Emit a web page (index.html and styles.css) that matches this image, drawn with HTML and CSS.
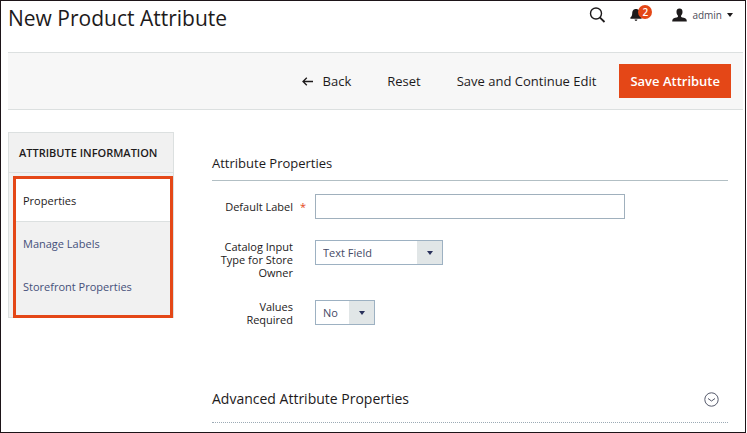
FILE: index.html
```html
<!DOCTYPE html>
<html lang="en">
<head>
<meta charset="utf-8">
<title>New Product Attribute</title>
<link rel="stylesheet" href="styles.css">
</head>
<body>
<div class="page">
  <header class="header">
    <h1 class="title">New Product Attribute</h1>
    <div class="tools">
      <button class="tool" type="button" aria-label="Search">
        <svg width="17" height="17" viewBox="0 0 17 17" fill="none" stroke="#1d1a1b"><circle cx="7" cy="6.5" r="5.5" stroke-width="1.4"/><path d="M10.8 10.4L15.5 15" stroke-width="1.800"/></svg>
      </button>
      <button class="tool bell" type="button" aria-label="Notifications">
        <svg width="12" height="14" viewBox="0 0 12 14" fill="#1d1a1b"><path d="M6 1C3 1 2.300 3.200 2.200 5.600C2.100 7.600 1.600 8.600.4 9.600V10.800H11.600V9.600C10.400 8.600 9.900 7.600 9.800 5.600C9.700 3.200 9 1 6 1ZM4.600 11.600H7.400C7.400 13.400 4.600 13.400 4.600 11.600Z"/></svg>
        <span class="badge">2</span>
      </button>
      <button class="tool account" type="button">
        <svg width="15" height="14" viewBox="0 0 15 14" fill="#1d1a1b"><path d="M7.500.5C5.300.5 4.300 2 4.500 4.200C4.600 6 5.300 6.900 5.900 7.600V9.100C4.500 9.900 1.800 9.900.7 11.200Q.2 11.900.2 13.400H14.800Q14.800 11.900 14.300 11.200C13.200 9.900 10.500 9.900 9.100 9.100V7.600C9.700 6.900 10.400 6 10.500 4.200C10.700 2 9.700.5 7.500.5Z"/></svg>
        <span>admin</span>
        <svg width="6" height="4" viewBox="0 0 6 4" fill="#1d1a1b"><path d="M0 0H6L3 4Z"/></svg>
      </button>
    </div>
  </header>

  <div class="toolbar">
    <button class="action back" type="button">
      <svg width="11" height="9" viewBox="0 0 11 9" fill="none" stroke="#1d1a1b" stroke-width="1.300"><path d="M11 4.500H1M4.800.7L1 4.500L4.800 8.300"/></svg>
      Back
    </button>
    <button class="action" type="button">Reset</button>
    <button class="action" type="button">Save and Continue Edit</button>
    <button class="action primary" type="button">Save Attribute</button>
  </div>

  <div class="columns">
    <nav class="sidebar">
      <h2 class="sidebar-title">Attribute Information</h2>
      <ul class="tabs">
        <li><a class="tab active" href="#properties">Properties</a></li>
        <li><a class="tab" href="#labels">Manage Labels</a></li>
        <li><a class="tab" href="#storefront">Storefront Properties</a></li>
      </ul>
    </nav>

    <main class="content" id="properties">
      <h2 class="section-title">Attribute Properties</h2>
      <form class="fields">
        <label class="label required" for="default-label">Default Label</label>
        <input class="text" id="default-label" type="text">

        <label class="label" for="input-type">Catalog Input Type for Store Owner</label>
        <span class="select wide"><select id="input-type"><option>Text Field</option></select></span>

        <label class="label" for="values-required">Values Required</label>
        <span class="select"><select id="values-required"><option>No</option><option>Yes</option></select></span>
      </form>
      <h2 class="section-title advanced">
        Advanced Attribute Properties
        <button class="tool" type="button" aria-label="Expand">
          <svg width="15" height="15" viewBox="0 0 15 15" fill="none" stroke="#54586a"><circle cx="7.500" cy="7.500" r="6.700"/><path d="M4 6.500L7.500 9L11 6.500"/></svg>
        </button>
      </h2>
    </main>
  </div>
</div>
</body>
</html>
```
FILE: styles.css
```css
* {
  box-sizing: border-box;
}

body {
  margin: 0;
  background: #fff;
  color: #1d1a1b;
  font-family: "Open Sans", "Noto Sans", sans-serif;
  font-size: 11px;
}

h1,
h2,
ul {
  margin: 0;
  padding: 0;
  font-weight: 400;
}

button,
input,
select {
  font: inherit;
  color: inherit;
}

.page {
  min-height: 100vh;
  margin-right: 1px;
  padding-left: 7px;
  border: 1px solid #1d1418;
}

.header {
  display: flex;
  justify-content: space-between;
  height: 51px;
  padding-right: 12px;
}

.title {
  font-size: 21px;
  line-height: 34px;
}

.tools {
  display: flex;
  align-items: center;
  height: 28px;
  gap: 24px;
}

.tool {
  display: flex;
  align-items: center;
  padding: 0;
  border: 0;
  background: none;
}

.bell {
  position: relative;
  padding-right: 12px;
}

.badge {
  position: absolute;
  left: 8px;
  top: -3px;
  width: 14px;
  border-radius: 7px;
  background: #e44717;
  color: #fff;
  font-size: 10px;
  font-weight: 600;
  line-height: 14px;
  text-align: center;
}

.account {
  gap: 5px;
  margin-left: -6px;
  color: #4c4c5a;
  font-size: 10px;
}

.toolbar {
  display: flex;
  align-items: center;
  justify-content: flex-end;
  gap: 36px;
  height: 58px;
  margin-right: 2px;
  padding-right: 12px;
  border: solid #dce0e0;
  border-width: 1px 0;
  background: #f7f7f7;
}

.action {
  padding: 0;
  border: 0;
  background: none;
  font-size: 13px;
  line-height: 18px;
}

.back {
  display: flex;
  align-items: center;
  gap: 10px;
}

.primary {
  height: 34px;
  margin-left: -13px;
  padding: 0 11px;
  background: #e44717;
  color: #fff;
  font-weight: 600;
}

.columns {
  display: flex;
  align-items: flex-start;
  gap: 38px;
  padding: 22px 17px 0 0;
}

.sidebar {
  flex: 0 0 166px;
  border: 1px solid #dce0e0;
  background: #f1f1f1;
}

.sidebar-title {
  padding-left: 10px;
  border-bottom: 1px solid #dce0e0;
  font-size: 11px;
  font-weight: 600;
  line-height: 39px;
  text-transform: uppercase;
}

.tabs {
  margin: 3px 0 -1px 4px;
  border: 3px solid #e44717;
  padding-bottom: 7px;
  list-style: none;
}

.tab {
  display: block;
  height: 43px;
  padding-left: 7px;
  color: #45507a;
  line-height: 43px;
  text-decoration: none;
}

.active {
  border-bottom: 1px solid #dce0e0;
  background: #fff;
  color: #1d1a1b;
}

.content {
  flex: 1;
  min-width: 0;
}

.section-title {
  padding: 22px 0 8px;
  border-bottom: 1px solid #b2bfc4;
  font-size: 13px;
  line-height: 18px;
}

.fields {
  display: grid;
  grid-template-columns: 81px 1fr;
  column-gap: 22px;
  row-gap: 21px;
  align-items: start;
  padding-top: 13px;
}

.label {
  position: relative;
  line-height: 13px;
  text-align: right;
}

.required {
  padding-top: 6px;
}

.required::after {
  content: "*";
  position: absolute;
  left: 88px;
  color: #e44717;
}

.text {
  width: 75%;
  height: 25px;
  padding: 0 8px;
  border: 1px solid #a0b0bd;
  background: #fff;
}

.select {
  display: flex;
  position: relative;
  width: 60px;
  height: 25px;
  border: 1px solid #9db1c2;
}

.wide {
  width: 128px;
}

.select select {
  appearance: none;
  width: 100%;
  padding: 0 7px;
  border: 0;
  border-radius: 0;
  background: linear-gradient(#e1e6e7, #e1e6e7) right / 25px 100% no-repeat #fff;
  color: #454a66;
}

.select::after {
  content: "";
  position: absolute;
  right: 9px;
  top: 10px;
  border: solid transparent;
  border-width: 4px 3px 0;
  border-top-color: #29315c;
  pointer-events: none;
}

.advanced {
  display: flex;
  justify-content: space-between;
  margin-top: 43px;
  padding: 21px 9px 14px 0;
  border-bottom-style: dotted;
  border-color: #9caab5;
  font-size: 14px;
}
```
